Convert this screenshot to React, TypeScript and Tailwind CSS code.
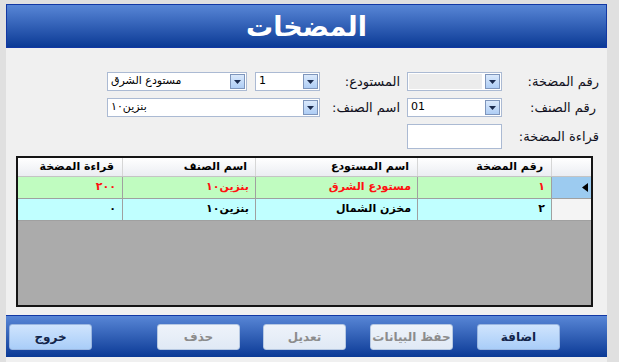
import React from 'react';

const arabic = { fontFamily: '"DejaVu Sans", "Noto Sans", sans-serif' };

function Combo({ width, value, disabled }: { width: string; value?: string; disabled?: boolean }) {
  return (
    <div className={`${width} h-[19px] flex items-center bg-white border border-[#abbad3] p-[1px]`}>
      <div
        className={`flex-1 h-full flex items-center justify-start pl-[2px] text-[11px] text-black overflow-hidden whitespace-nowrap ${disabled ? 'bg-[#ececec] mr-[3px]' : ''}`}
        style={arabic}
      >
        <span dir="rtl">{value}</span>
      </div>
      <div className="w-[15px] h-[15px] flex items-center justify-center border border-[#7e95bb] bg-gradient-to-b from-[#dbe9fb] to-[#aecdf5]">
        <svg width="7" height="4" viewBox="0 0 7 4">
          <path d="M0 0h7L3.5 4z" fill="#1b2b4e" />
        </svg>
      </div>
    </div>
  );
}

function Label({ text, className }: { text: string; className: string }) {
  return (
    <div className={`${className} h-full flex items-center justify-end text-[13px] text-[#101020]`} style={arabic}>
      <span dir="rtl">{text}</span>
    </div>
  );
}

function Button({ text, enabled }: { text: string; enabled?: boolean }) {
  return (
    <div
      className={`w-[83px] h-[26px] rounded-[3px] border flex items-center justify-center text-[12px] font-bold ${
        enabled
          ? 'border-[#9ab6e0] bg-gradient-to-b from-[#cfe4fd] to-[#a9cdf8] text-[#13254a]'
          : 'border-[#b6c8e2] bg-gradient-to-b from-[#eef3fa] to-[#e0e9f5] text-[#8c8c8c]'
      }`}
      style={arabic}
    >
      <span dir="rtl">{text}</span>
    </div>
  );
}

const cols = ['w-[105px]', 'w-[133px]', 'w-[162px]', 'w-[134px]'];

const rows = [
  { cells: ['٢٠٠', 'بنزين١٠', 'مستودع الشرق', '١'], bg: 'bg-[#c0fcc0]', text: 'text-[#ff1010]', selected: true },
  { cells: ['٠', 'بنزين١٠', 'مخزن الشمال', '٢'], bg: 'bg-[#c0ffff]', text: 'text-black', selected: false },
];

export default function App() {
  return (
    <div className="w-[619px] h-[362px] bg-[#e0e0e0] pl-[6px] pt-[4px] overflow-hidden">
      <div className="w-[601px] h-[358px] bg-[#f0f0f0] flex flex-col">
        {/* header */}
        <div className="h-[44px] border border-[#1238a4] bg-gradient-to-b from-[#5886d6] to-[#0a3a96] flex items-center justify-center">
          <span dir="rtl" className="text-white font-bold text-[27px] leading-none" style={arabic}>
            المضخات
          </span>
        </div>

        {/* form */}
        <div className="mt-[24px] flex flex-col gap-[7px]">
          <div className="h-[19px] flex items-center pl-[101px]">
            <Combo width="w-[140px]" value="مستودع الشرق" />
            <div className="w-[8px]" />
            <Combo width="w-[65px]" value="1" />
            <Label text="المستودع:" className="w-[87px] pr-[7px]" />
            <Combo width="w-[95px]" disabled />
            <Label text="رقم المضخة:" className="w-[98px] pr-[1px]" />
          </div>
          <div className="h-[19px] flex items-center pl-[101px]">
            <Combo width="w-[213px]" value="بنزين١٠" />
            <Label text="اسم الصنف:" className="w-[87px] pr-[7px]" />
            <Combo width="w-[95px]" value="01" />
            <Label text="رقم الصنف:" className="w-[98px] pr-[4px]" />
          </div>
          <div className="h-[25px] flex items-center pl-[401px]">
            <div className="w-[95px] h-[25px] bg-white border border-[#abbad3]" />
            <Label text="قراءة المضخة:" className="w-[99px] pr-[2px]" />
          </div>
        </div>

        {/* grid */}
        <div className="mt-[7px] ml-[10px] w-[577px] h-[151px] border-2 border-[#151515] bg-[#ababab] flex flex-col" style={arabic}>
          <div className="h-[19px] flex bg-gradient-to-b from-[#ffffff] to-[#ebedf2] border-b border-[#c4c4c4]">
            {['قراءة المضخة', 'اسم الصنف', 'اسم المستودع', 'رقم المضخة'].map((h, i) => (
              <div key={h} className={`${cols[i]} h-full border-r border-[#d6d6d6] flex items-center justify-end pr-[8px] text-[11px] font-bold text-black`}>
                <span dir="rtl">{h}</span>
              </div>
            ))}
            <div className="flex-1" />
          </div>
          {rows.map((r, ri) => (
            <div key={ri} className="h-[22px] flex border-b border-[#a0a0a0]">
              {r.cells.map((c, i) => (
                <div
                  key={i}
                  className={`${cols[i]} h-full ${r.bg} border-r border-[#a0a0a0] flex items-center justify-end pr-[6px] text-[11px] font-bold ${r.text}`}
                >
                  <span dir="rtl">{c}</span>
                </div>
              ))}
              <div className={`flex-1 h-full flex items-center justify-end pr-[3px] ${r.selected ? 'bg-[#9ccbf0]' : 'bg-[#f4f4f4]'}`}>
                {r.selected && (
                  <svg width="6" height="9" viewBox="0 0 6 9">
                    <path d="M6 0v9L0 4.5z" fill="#000" />
                  </svg>
                )}
              </div>
            </div>
          ))}
        </div>

        {/* toolbar */}
        <div className="mt-[8px] h-[42px] border-t border-[#1238a4] bg-gradient-to-b from-[#5886d6] to-[#0a3a96] flex items-center pl-[3px]">
          <Button text="خروج" enabled />
          <div className="w-[65px]" />
          <Button text="حذف" />
          <div className="w-[23px]" />
          <Button text="تعديل" />
          <div className="w-[24px]" />
          <Button text="حفظ البيانات" />
          <div className="w-[24px]" />
          <Button text="اضافة" enabled />
        </div>
      </div>
    </div>
  );
}
